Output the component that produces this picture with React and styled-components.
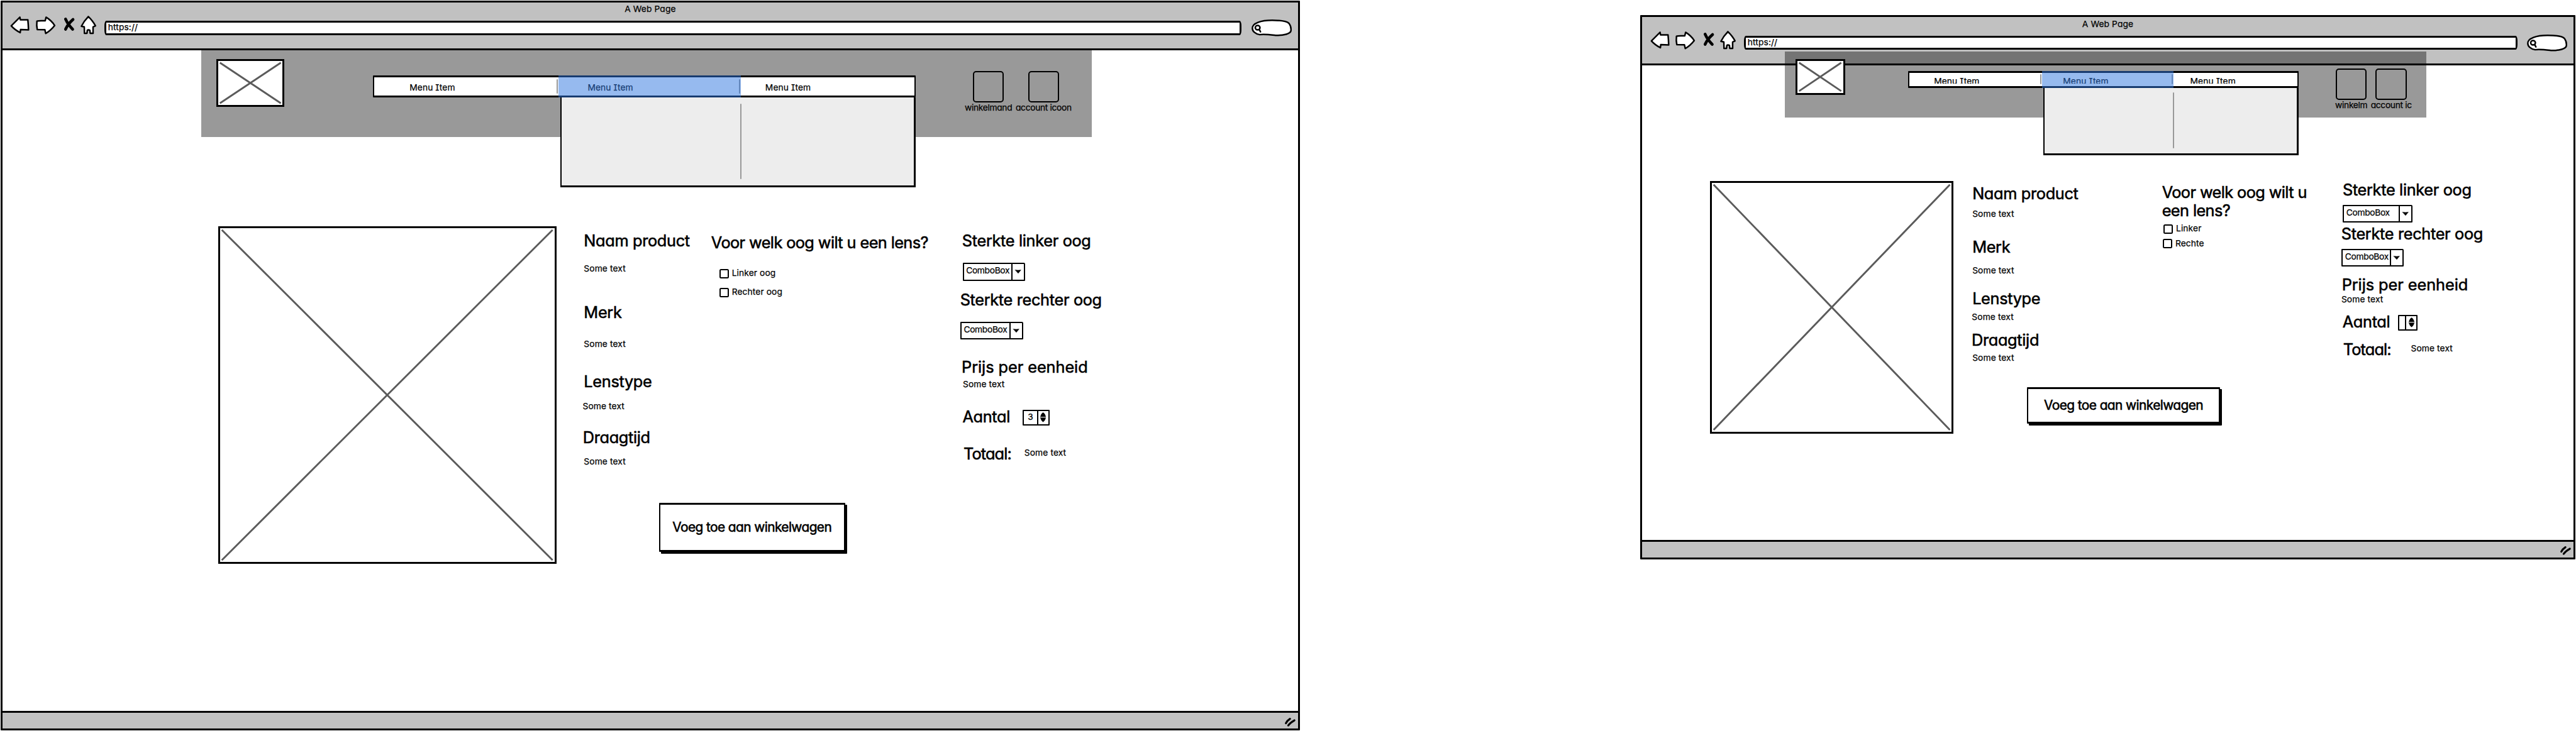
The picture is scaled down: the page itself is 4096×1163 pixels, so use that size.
import React from "react";
import styled, { createGlobalStyle } from "styled-components";

const SCALE = 0.5385;
const s = (n) => `${Math.round(n * SCALE * 100) / 100}px`;

const GlobalStyle = createGlobalStyle`
  *, *::before, *::after { box-sizing: border-box; }
  html, body { margin: 0; background: #fff; }
  body {
    font-family: Inter, "Open Sans", sans-serif;
    font-feature-settings: "cv11", "cv08";
    color: #000;
    overflow: hidden;
  }
`;

/* ---------- text ---------- */

const Heading = styled.div`
  font-size: ${s(47)};
  font-weight: 400;
  -webkit-text-stroke: 0.6px #000;
  line-height: ${(p) => s(p.$line || 40)};
  letter-spacing: ${(p) => s(p.$track === undefined ? -0.6 : p.$track)};
  white-space: nowrap;
  margin-top: ${(p) => s(p.$gap || 0)};
  margin-left: ${(p) => s(p.$indent || 0)};
`;

const Small = styled.div`
  font-size: ${s(25.6)};
  -webkit-text-stroke: 0.25px #000;
  line-height: ${s(25)};
  height: ${s(24)};
  letter-spacing: ${(p) => s(p.$track === undefined ? 0.2 : p.$track)};
  white-space: nowrap;
  margin-top: ${(p) => s(p.$gap || 0)};
  margin-left: ${(p) => s(p.$indent || 0)};
`;

/* ---------- browser window ---------- */

const Canvas = styled.main`
  width: 4096px;
  height: 1163px;
  display: flex;
  align-items: flex-start;
  justify-content: space-between;
  padding: ${s(1)} ${s(2)} 0 ${s(2)};
`;

const Window = styled.section`
  width: ${(p) => s(p.$w)};
  height: ${(p) => s(p.$h)};
  margin-top: ${(p) => s(p.$top)};
  border: 3px solid #000;
  border-radius: 1px;
  display: flex;
  flex-direction: column;
  background: #fff;
`;

const TitleBar = styled.header`
  flex: none;
  height: ${s(142.5)};
  background: #c1c1c1;
  border-bottom: 3px solid #000;
  padding-top: ${s(8.4)};
`;

const Title = styled(Small)`
  text-align: center;
`;

const Toolbar = styled.div`
  display: flex;
  align-items: flex-start;
  height: ${s(60)};
  margin-top: ${s(7.2)};
  padding: 0 ${s(18)} 0 ${s(23)};
`;

const Glyph = styled.svg`
  display: block;
  flex: none;
  width: ${(p) => s(p.$w)};
  height: ${(p) => s(p.$h || 60)};
  margin-left: ${(p) => s(p.$ml || 0)};
  overflow: visible;
  fill: ${(p) => p.$fill || "#fff"};
  stroke: #000;
  stroke-width: ${(p) => p.$stroke || 4.6};
  stroke-linejoin: round;
  stroke-linecap: round;
`;

const AddressBar = styled.div`
  flex: 1;
  height: ${s(42.5)};
  margin: ${s(15)} ${s(29)} 0 ${s(23)};
  border: 3px solid #000;
  border-radius: 3px / 8px;
  background: #fff;
  padding: ${s(2)} 0 0 ${s(5)};
`;

const Page = styled.div`
  flex: 1;
  min-height: 0;
`;

const Footer = styled.footer`
  flex: none;
  height: ${s(52)};
  background: #c1c1c1;
  border-top: 3px solid #000;
  display: flex;
  justify-content: flex-end;
  padding: ${s(14)} ${s(4)} 0 0;
`;

/* ---------- site header ---------- */

const SiteHeader = styled.div`
  position: relative;
  display: flex;
  align-items: flex-start;
  width: ${(p) => s(p.$w)};
  height: ${(p) => s(p.$h)};
  margin-left: ${(p) => s(p.$ml)};
  margin-top: ${(p) => s(p.$mt)};
  background: rgba(0, 0, 0, 0.4);
`;

const ImageBox = styled.div`
  flex: none;
  width: ${(p) => s(p.$w)};
  height: ${(p) => s(p.$h)};
  margin: ${(p) => s(p.$mt)} 0 0 ${(p) => s(p.$ml)};
  border: 3px solid #000;
  background: #fff;
  svg { display: block; width: 100%; height: 100%; }
`;

const Menu = styled.nav`
  position: relative;
  flex: none;
  display: grid;
  grid-template-columns: ${(p) => p.$cols.map(s).join(" ")};
  width: ${(p) => s(p.$w)};
  height: ${(p) => s(p.$h)};
  margin: ${(p) => s(p.$mt)} 0 0 ${(p) => s(p.$ml)};
  border: 3px solid #000;
  border-left-width: 2px;
  border-right-width: 2px;
  border-radius: 1px;
  background: #fff;
`;

const MenuCell = styled.div`
  display: flex;
  align-items: flex-start;
  padding-left: ${(p) => s(p.$pad)};
`;

const MenuLabel = styled(Small)`
  margin-top: ${(p) => s(p.$top)};
  height: ${(p) => (p.$clip ? s(p.$clip) : "auto")};
  overflow: ${(p) => (p.$clip ? "hidden" : "visible")};
`;

const Divider = styled.i`
  width: 2px;
  height: ${(p) => s(p.$h)};
  margin: ${(p) => s(p.$mt)} 1px 0 auto;
  border-radius: 1px;
  background: #999;
`;

const Highlight = styled.div`
  position: absolute;
  z-index: 2;
  top: -3px;
  left: ${(p) => s(p.$x)};
  width: ${(p) => s(p.$w)};
  height: ${(p) => s(p.$h)};
  background: rgba(46, 118, 224, 0.5);
`;

const Dropdown = styled.div`
  position: absolute;
  top: calc(100% + 3px);
  right: -2px;
  display: flex;
  width: ${(p) => s(p.$w)};
  height: ${(p) => s(p.$h)};
  border: solid #000;
  border-width: 0 3px 3px 2px;
  background: #ededed;
`;

const DropdownRule = styled.i`
  width: 2px;
  height: ${(p) => s(p.$h)};
  margin: ${(p) => s(p.$mt)} 0 0 ${(p) => s(p.$ml)};
  border-radius: 1px;
  background: #999;
`;

const Shortcuts = styled.div`
  display: flex;
  gap: ${(p) => s(p.$gap)};
  margin: ${(p) => s(p.$mt)} 0 0 ${(p) => s(p.$ml)};
`;

const Shortcut = styled.div`
  display: flex;
  flex-direction: column;
  align-items: center;
  width: ${(p) => s(p.$w)};
`;

const ShortcutBox = styled.div`
  width: ${s(92)};
  height: ${s(92)};
  border: 2px solid #000;
  border-radius: 5px;
  margin-bottom: ${s(4.8)};
`;

/* ---------- product page ---------- */

const Product = styled.div`
  display: flex;
  align-items: flex-start;
`;

const Center = styled.div`
  flex: none;
  width: ${(p) => s(p.$w)};
  margin-left: ${(p) => s(p.$ml)};
`;

const Info = styled.div`
  display: flex;
  align-items: flex-start;
`;

const Column = styled.div`
  flex: none;
  width: ${(p) => (p.$w ? s(p.$w) : "auto")};
  padding-top: ${(p) => s(p.$top)};
`;

const CheckRow = styled.label`
  display: flex;
  align-items: flex-start;
  height: ${s(28)};
  margin: ${(p) => s(p.$gap)} 0 0 ${(p) => s(p.$indent)};
`;

const CheckBox = styled.span`
  width: ${s(28)};
  height: ${s(28)};
  border: 2px solid #000;
  border-radius: 2.5px;
  margin-right: ${s(9)};
`;

const Combo = styled.div`
  display: flex;
  width: ${(p) => s(p.$w)};
  height: ${s(53.5)};
  margin: ${(p) => s(p.$gap)} 0 0 ${(p) => s(p.$indent)};
  border: 2px solid #000;
  border-radius: 1px 2px 1px 1px;
  padding-left: ${s(6.5)};
`;

const ComboArrow = styled.span`
  display: flex;
  align-items: center;
  justify-content: center;
  width: ${s(37)};
  margin-left: auto;
  border-left: 2px solid #000;
`;

const Row = styled.div`
  display: flex;
  align-items: flex-start;
  margin: ${(p) => s(p.$gap)} 0 0 ${(p) => s(p.$indent)};
`;

const RowLabel = styled(Heading)`
  width: ${(p) => s(p.$w)};
`;

const Stepper = styled.div`
  display: flex;
  width: ${(p) => s(p.$w)};
  height: ${s(47)};
  border: 2px solid #000;
  border-radius: 1px;
`;

const StepValue = styled(Small)`
  flex: 1;
  text-align: center;
  padding-top: ${s(6)};
`;

const StepArrows = styled.span`
  display: flex;
  align-items: center;
  justify-content: center;
  width: ${s(33)};
  border-left: 2px solid #000;
`;

const Button = styled.button`
  display: flex;
  align-items: center;
  justify-content: center;
  width: ${(p) => s(p.$w - 5)};
  height: ${(p) => s(p.$h - 5)};
  margin: ${(p) => s(p.$gap)} 0 0 ${(p) => s(p.$indent)};
  padding: 0 0 ${s(1)};
  border: 3px solid #000;
  border-left-width: 2px;
  border-right-width: 2px;
  border-radius: 1px;
  box-shadow: 3px 3px 0 #000;
  background: #fff;
  color: #000;
  font: 400 ${s(38.8)} Inter, "Open Sans", sans-serif;
  -webkit-text-stroke: 0.6px #000;
  font-feature-settings: inherit;
  letter-spacing: ${s(-1.1)};
  white-space: nowrap;
`;

/* ---------- parts ---------- */

function Crossed({ w, h, ...box }) {
  return (
    <ImageBox $w={w} $h={h} {...box}>
      <svg viewBox={`0 0 ${w - 11} ${h - 11}`} preserveAspectRatio="none" stroke="#5b5b5b" strokeWidth="5.4">
        <path d={`M5 5 L${w - 16} ${h - 16} M${w - 16} 5 L5 ${h - 16}`} />
      </svg>
    </ImageBox>
  );
}

function BrowserBar() {
  return (
    <TitleBar>
      <Title>A Web Page</Title>
      <Toolbar>
        <Glyph $w={58} viewBox="30 46 58 60">
          <path d="M33.5 76 L59 50.500 L60.500 58 L82.500 58 Q84 72 84.500 88 L61 87 L60 96 Q44 88 33.500 76Z" />
        </Glyph>
        <Glyph $w={60} $ml={16} viewBox="104 46 60 60">
          <path d="M109 62 Q114 60 133.500 61 L136 50.500 Q152 60 161.500 75 Q150 90 135 98.500 L132.500 87.500 L110 87 Q107.500 75 109 62Z" />
        </Glyph>
        <Glyph $w={35} $ml={23} $stroke={8.5} viewBox="187 46 35 60">
          <path d="M193 56 Q200 72 214 86 M215 57 Q200 70 193 86" fill="none" />
        </Glyph>
        <Glyph $w={50} $ml={13} viewBox="235 46 50 60">
          <path d="M260 48.500 Q274 62 281 76 L274 79 L274 98 L265.500 98 L264.500 89 Q260 87 257 89 L256 98 L248.500 98 L248 79 L239.500 77 Q247 62 260 48.500Z" />
        </Glyph>
        <AddressBar>
          <Small>https://</Small>
        </AddressBar>
        <Glyph $w={119} viewBox="3695 46 119 60">
          <path d="M3719 102 C3706 100 3697.500 92 3697.500 83 C3697.500 68 3722 59.500 3756 59.500 C3785 59.500 3800 62 3806 69 C3811 76 3812 85 3811.500 90 C3811 99 3790 105 3766 104 C3748 102 3732 100 3719 102Z" />
          <ellipse cx="3713" cy="81.500" rx="7" ry="6.500" />
          <path d="M3718 87 L3721.500 93.500" />
        </Glyph>
      </Toolbar>
    </TitleBar>
  );
}

function SiteNav({ header, logo, menu, shortcuts }) {
  return (
    <SiteHeader {...header}>
      <Crossed {...logo} />
      <Menu {...menu.box}>
        {menu.pads.map((pad, i) => (
          <MenuCell key={i} $pad={pad}>
            <MenuLabel $top={menu.labelTop} $clip={menu.labelClip}>Menu Item</MenuLabel>
            {i < 2 && <Divider $h={menu.rule} $mt={menu.ruleTop} />}
          </MenuCell>
        ))}
        <Dropdown {...menu.drop}>
          <DropdownRule {...menu.dropRule} />
        </Dropdown>
        <Highlight {...menu.highlight} />
      </Menu>
      <Shortcuts {...shortcuts.box}>
        {shortcuts.items.map(([text, w]) => (
          <Shortcut key={text} $w={w}>
            <ShortcutBox />
            <Small $track={-0.6}>{text}</Small>
          </Shortcut>
        ))}
      </Shortcuts>
    </SiteHeader>
  );
}

function ComboBox(props) {
  return (
    <Combo {...props}>
      <Small $gap={7.500} $track={-0.6}>ComboBox</Small>
      <ComboArrow>
        <Glyph $w={18} $h={11} $fill="#000" $stroke={1} viewBox="0 0 18 11">
          <path d="M0.500 1 Q9 2.500 17.500 1 L9.500 10.500Z" />
        </Glyph>
      </ComboArrow>
    </Combo>
  );
}

function NumberStepper({ w, value }) {
  return (
    <Stepper $w={w}>
      <StepValue>{value}</StepValue>
      <StepArrows>
        <Glyph $w={17} $h={29} $fill="#000" $stroke={0.6} viewBox="0 0 17 29">
          <path d="M0.500 13 Q3 3 8.500 0.500 Q14 3 16.500 13Z M0.500 16 L16.500 16 Q14 26 8.500 28.500 Q3 26 0.500 16Z" />
        </Glyph>
      </StepArrows>
    </Stepper>
  );
}

function Mockup({ frame, nav, image, center, specs, question, order, button }) {
  return (
    <Window {...frame}>
      <BrowserBar />
      <Page>
        <SiteNav {...nav} />
        <Product>
          <Crossed {...image} />
          <Center {...center}>
            <Info>
              <Column $w={specs.w} $top={specs.top}>
                {specs.items.map(([name, gap, indent, textGap, textIndent]) => (
                  <React.Fragment key={name}>
                    <Heading $gap={gap} $indent={indent}>{name}</Heading>
                    <Small $gap={textGap} $indent={textIndent}>Some text</Small>
                  </React.Fragment>
                ))}
              </Column>
              <Column $top={question.top}>
                {question.lines.map((line) => (
                  <Heading key={line} $line={55.3} $track={-1.1}>{line}</Heading>
                ))}
                {question.options.map(([text, gap, indent]) => (
                  <CheckRow key={text} $gap={gap} $indent={indent}>
                    <CheckBox />
                    <Small $gap={0.8}>{text}</Small>
                  </CheckRow>
                ))}
              </Column>
            </Info>
            <Button {...button}>Voeg toe aan winkelwagen</Button>
          </Center>
          <Column $top={order.top}>
            <Heading $indent={order.left.indent}>Sterkte linker oog</Heading>
            <ComboBox {...order.left.combo} />
            <Heading $gap={order.right.gap} $indent={order.right.indent}>Sterkte rechter oog</Heading>
            <ComboBox {...order.right.combo} />
            <Heading $track={-0.1} {...order.price}>Prijs per eenheid</Heading>
            <Small {...order.priceText}>Some text</Small>
            <Row {...order.amount.row}>
              <RowLabel $w={order.amount.w} $gap={1.2}>Aantal</RowLabel>
              <NumberStepper w={order.amount.stepper} value={order.amount.value} />
            </Row>
            <Row {...order.total.row}>
              <RowLabel $w={order.total.w} $track={-1.6}>Totaal:</RowLabel>
              <Small $gap={6.200}>Some text</Small>
            </Row>
          </Column>
        </Product>
      </Page>
      <Footer>
        <Glyph $w={36} $h={28} $stroke={6} viewBox="3795 2122 36 28">
          <path d="M3800 2138 Q3804 2130 3812 2125 M3807 2144.500 Q3812 2137 3825 2129.500" fill="none" />
        </Glyph>
      </Footer>
    </Window>
  );
}

const wide = {
  frame: { $w: 3836, $h: 2157, $top: 0 },
  nav: {
    header: { $w: 2630, $h: 255, $ml: 586.5, $mt: 0 },
    logo: { w: 201, h: 141, $mt: 25, $ml: 44.5 },
    menu: {
      box: { $w: 1603, $h: 66, $mt: 73, $ml: 261, $cols: [545, 538.5, 512] },
      pads: [105, 86, 72],
      labelTop: 19.2,
      rule: 43,
      ruleTop: 6.5,
      highlight: { $x: 545, $w: 538.5, $h: 66 },
      drop: { $w: 1048.5, $h: 265 },
      dropRule: { $h: 223, $mt: 18.5, $ml: 526 },
    },
    shortcuts: {
      box: { $gap: 14, $mt: 61, $ml: 147 },
      items: [["winkelmand", 136], ["account icoon", 162]],
    },
  },
  image: { w: 998, h: 997, $mt: 265, $ml: 637.5 },
  center: { $w: 1114, $ml: 77 },
  specs: {
    w: 380,
    top: 286.8,
    items: [
      ["Naam product", 0, 4, 51.8, 4],
      ["Merk", 95.4, 4, 62.8, 4],
      ["Lenstype", 77.8, 4, 41.6, 0.5],
      ["Draagtijd", 59.8, 1, 40.5, 4],
    ],
  },
  question: {
    top: 284.4,
    lines: ["Voor welk oog wilt u een lens?"],
    options: [["Linker oog", 50.3, 24], ["Rechter oog", 28, 24]],
  },
  button: { $w: 554, $h: 150, $gap: 109.5, $indent: 226 },
  order: {
    top: 286,
    left: { indent: 7, combo: { $w: 185, $gap: 46, $indent: 8.5 } },
    right: { gap: 35.2, indent: 1, combo: { $w: 185, $gap: 45.3, $indent: 1.5 } },
    price: { $gap: 61.2, $indent: 5.5 },
    priceText: { $gap: 19.1, $indent: 9 },
    amount: { row: { $gap: 62.2, $indent: 8 }, w: 178, stepper: 79, value: "3" },
    total: { row: { $gap: 63, $indent: 11 }, w: 179.7 },
  },
};

const narrow = {
  frame: { $w: 2761, $h: 1607, $top: 44 },
  nav: {
    header: { $w: 1894, $h: 194, $ml: 421, $mt: -40.5 },
    logo: { w: 145.5, h: 105, $mt: 22, $ml: 32.5 },
    menu: {
      box: { $w: 1154, $h: 49.5, $mt: 58, $ml: 186, $cols: [393, 387.5, 366] },
      pads: [73, 61, 49],
      labelTop: 12.7,
      labelClip: 18.6,
      rule: 30,
      ruleTop: 3.5,
      highlight: { $x: 393, $w: 387.5, $h: 50 },
      drop: { $w: 755, $h: 198 },
      dropRule: { $h: 165, $mt: 13, $ml: 380 },
    },
    shortcuts: {
      box: { $gap: 11, $mt: 50, $ml: 108 },
      items: [["winkelm", 94], ["account ic", 120]],
    },
  },
  image: { w: 719, h: 746, $mt: 188, $ml: 200 },
  center: { $w: 1092, $ml: 52 },
  specs: {
    w: 564,
    top: 204.8,
    items: [
      ["Naam product", 0, 4, 29.5, 4],
      ["Merk", 63.7, 4, 38.4, 4],
      ["Lenstype", 50.1, 4, 23.9, 2.5],
      ["Draagtijd", 35.6, 2, 21.8, 4],
    ],
  },
  question: {
    top: 193,
    lines: ["Voor welk oog wilt u", "een lens?"],
    options: [["Linker", 12.3, 4.5], ["Rechte", 16, 2.5]],
  },
  button: { $w: 575, $h: 112, $gap: 74.2, $indent: 165.5 },
  order: {
    top: 194,
    left: { indent: 5.5, combo: { $w: 206, $gap: 24, $indent: 6 } },
    right: { gap: 12.9, indent: 1.5, combo: { $w: 183, $gap: 23.6, $indent: 2.5 } },
    price: { $gap: 33.3, $indent: 3 },
    priceText: { $gap: 11.5, $indent: 1.7 },
    amount: { row: { $gap: 32.7, $indent: 5 }, w: 164, stepper: 57.5, value: "" },
    total: { row: { $gap: 35.1, $indent: 7 }, w: 200 },
  },
};

export default function App() {
  return (
    <>
      <GlobalStyle />
      <Canvas>
        <Mockup {...wide} />
        <Mockup {...narrow} />
      </Canvas>
    </>
  );
}
